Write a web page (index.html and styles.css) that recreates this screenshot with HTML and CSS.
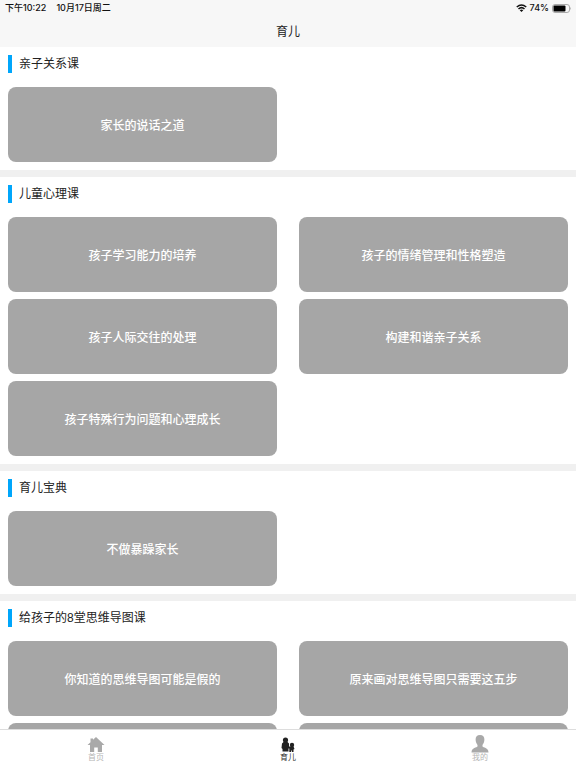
FILE: index.html
```html
<!DOCTYPE html>
<html lang="zh-CN">
<head>
  <meta charset="UTF-8">
  <meta name="viewport" content="width=device-width, initial-scale=1.0">
  <title>育儿</title>
  <link rel="stylesheet" href="styles.css">
</head>
<body>

  <header>
    <div class="status">
      <span>下午10:22</span>
      <span>10月17日周二</span>
      <div class="status-right">
        <svg width="11" height="8" viewBox="0 0 22 16">
          <path d="M1.500 6 Q11 -2 20.500 6" fill="none" stroke="#111" stroke-width="3"/>
          <path d="M5 10 Q11 4.500 17 10" fill="none" stroke="#111" stroke-width="3"/>
          <path d="M7.500 12.500 Q11 9.500 14.500 12.500 L11 16 Z" fill="#111"/>
        </svg>
        <span>74%</span>
        <svg width="19" height="9" viewBox="0 0 19 9">
          <rect x="0.500" y="0.500" width="17" height="8" rx="2.500" fill="none" stroke="#aaa"/>
          <rect x="1.500" y="1.500" width="12" height="6" rx="1" fill="#000"/>
          <path d="M18 3 Q19.500 4.500 18 6 Z" fill="#aaa"/>
        </svg>
      </div>
    </div>
    <h1>育儿</h1>
  </header>

  <main>
    <section>
      <h2>亲子关系课</h2>
      <div class="cards">
        <a class="card" href="#">家长的说话之道</a>
      </div>
    </section>

    <section>
      <h2>儿童心理课</h2>
      <div class="cards">
        <a class="card" href="#">孩子学习能力的培养</a>
        <a class="card" href="#">孩子的情绪管理和性格塑造</a>
        <a class="card" href="#">孩子人际交往的处理</a>
        <a class="card" href="#">构建和谐亲子关系</a>
        <a class="card" href="#">孩子特殊行为问题和心理成长</a>
      </div>
    </section>

    <section>
      <h2>育儿宝典</h2>
      <div class="cards">
        <a class="card" href="#">不做暴躁家长</a>
      </div>
    </section>

    <section>
      <h2>给孩子的8堂思维导图课</h2>
      <div class="cards">
        <a class="card" href="#">你知道的思维导图可能是假的</a>
        <a class="card" href="#">原来画对思维导图只需要这五步</a>
        <div class="card"></div>
        <div class="card"></div>
      </div>
    </section>
  </main>

  <nav>
    <a href="#">
      <svg width="18" height="16" viewBox="0 0 18 16" fill="#a9a9a9">
        <path d="M9 0 L17.500 8 H15 V15 H10.800 V10.500 H7.200 V15 H3 V8 H0.500 L3.500 5.200 V1.500 H6 V2.800 Z"/>
      </svg>
      <span>首页</span>
    </a>
    <a class="active" href="#">
      <svg width="18" height="16" viewBox="0 0 18 16" fill="#222">
        <circle cx="6.500" cy="3" r="2.600"/>
        <path d="M4.500 5 H8.500 L10 6.500 V9.500 H14.500 L15.500 12 L14.500 12.500 V15 H12.800 V13.500 H12 V15 H10.300 V11.500 H9.500 V14.500 H3.500 V12 L2.500 11 L3 6.500 Z"/>
        <circle cx="13" cy="8" r="2.200"/>
      </svg>
      <span>育儿</span>
    </a>
    <a href="#">
      <svg width="18" height="18" viewBox="0 0 18 18" fill="#a9a9a9">
        <path d="M9 0 C12 0 13.500 2 13.400 4.800 C13.300 7.300 12.200 9 11.500 10 V11.500 C12 12.500 17.500 12.500 17.500 17.500 H0.500 C0.500 12.500 6 12.500 6.500 11.500 V10 C5.800 9 4.700 7.300 4.600 4.800 C4.500 2 6 0 9 0 Z"/>
      </svg>
      <span>我的</span>
    </a>
  </nav>

</body>
</html>
```

FILE: styles.css
```css
* { box-sizing: border-box; }
body { margin: 0; height: 100vh; display: flex; flex-direction: column; background: #fff; color: #222; font-family: "Liberation Sans", "Noto Sans CJK SC", sans-serif; font-size: 12px; }
a { color: inherit; text-decoration: none; }

header { flex: none; background: #f7f7f7; }
.status { display: flex; align-items: center; gap: 10px; height: 16px; padding: 0 5px; color: #111; font-family: Inter, "Noto Sans CJK SC", sans-serif; font-size: 9px; font-weight: 500; line-height: 16px; }
.status-right { display: flex; align-items: center; gap: 3px; margin-left: auto; }
h1 { margin: 0; padding-top: 2px; font-size: 12px; font-weight: 400; line-height: 29px; text-align: center; }

main { flex: 1; min-height: 0; overflow: hidden; }
section { padding: 8px; border-bottom: 7px solid #f0f0f0; }
h2 { margin: 0 0 14px; padding: 1px 0 0 7px; border-left: 4px solid #00a6fb; font-size: 12px; font-weight: 400; line-height: 17px; }
.cards { display: grid; grid-template-columns: 1fr 1fr; gap: 7px 22px; }
.card { display: flex; align-items: center; justify-content: center; height: 75px; border-radius: 8px; background: #a6a6a6; color: #fff; font-weight: 500; }

nav { flex: none; display: flex; height: 39px; border-top: 1px solid #ddd; background: #fff; }
nav a { flex: 1; display: flex; flex-direction: column; align-items: center; justify-content: flex-end; padding-bottom: 5px; color: #b5b5b5; font-size: 8px; line-height: 10px; }
nav svg { display: block; }
nav .active { color: #333; }
```
